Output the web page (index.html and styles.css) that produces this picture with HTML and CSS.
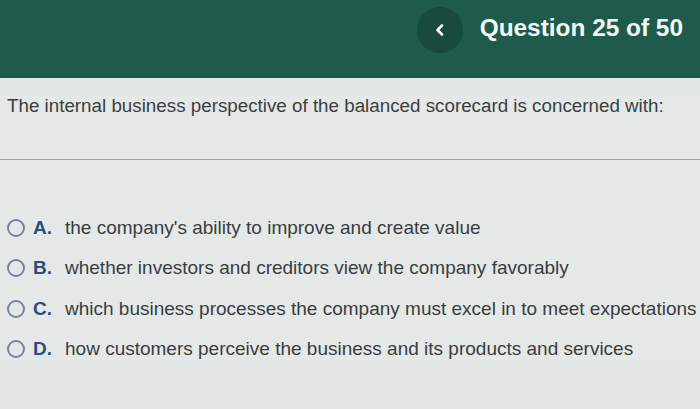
FILE: index.html
```html
<!DOCTYPE html>
<html>
<head>
<meta charset="utf-8">
<link rel="stylesheet" href="styles.css">
</head>
<body>
<header class="topbar">
  <button class="back" aria-label="Back">
    <svg width="12" height="14" viewBox="0 0 12 14"><path d="M8 2.5 L3.5 7 L8 11.5" fill="none" stroke="#fff" stroke-width="2.6" stroke-linecap="round" stroke-linejoin="round"/></svg>
  </button>
  <h1 class="title">Question 25 of 50</h1>
</header>
<main class="content">
  <p class="question">The internal business perspective of the balanced scorecard is concerned with:</p>
  <hr class="divider">
  <ul class="options">
    <li class="option"><span class="radio"></span><span class="letter">A.</span><span class="text">the company's ability to improve and create value</span></li>
    <li class="option"><span class="radio"></span><span class="letter">B.</span><span class="text">whether investors and creditors view the company favorably</span></li>
    <li class="option"><span class="radio"></span><span class="letter">C.</span><span class="text">which business processes the company must excel in to meet expectations</span></li>
    <li class="option"><span class="radio"></span><span class="letter">D.</span><span class="text">how customers perceive the business and its products and services</span></li>
  </ul>
</main>
</body>
</html>
```
FILE: styles.css
```css
html, body {
  margin: 0;
  padding: 0;
}
body {
  width: 700px;
  height: 409px;
  overflow: hidden;
  background: #e3e8e7;
  font-family: "Liberation Sans", Arial, sans-serif;
  color: #3a3d3f;
}
.topbar {
  height: 78px;
  background: #1f5b4d;
  display: flex;
  justify-content: flex-end;
  align-items: flex-start;
  padding: 7px 17px 0 0;
  box-sizing: border-box;
  gap: 17px;
}
.back {
  width: 46px;
  height: 46px;
  border-radius: 50%;
  background: #184a3e;
  border: none;
  padding: 0;
  display: flex;
  align-items: center;
  justify-content: center;
}
.title {
  margin: 7px 0 0 0;
  font-size: 24.4px;
  font-weight: bold;
  color: #f4f7f6;
  line-height: 28px;
}
.content {
  background: #e4e9e8;
}
.question {
  margin: 16px 0 0 0;
  padding: 0 0 0 7px;
  font-size: 18.8px;
  line-height: 24px;
  color: #3b3e40;
  height: 65px;
  box-sizing: border-box;
  white-space: nowrap;
}
.divider {
  margin: 0;
  border: none;
  border-top: 1px solid #9ea6a6;
  height: 0;
}
.options {
  list-style: none;
  margin: 0;
  padding: 56px 0 0 7px;
  display: flex;
  flex-direction: column;
  gap: 16.33px;
}
.option {
  display: flex;
  align-items: center;
  height: 24px;
  font-size: 19px;
}
.radio {
  width: 14px;
  height: 14px;
  border: 2px solid #74869a;
  border-radius: 50%;
  flex: none;
}
.letter {
  margin-left: 8px;
  width: 32px;
  font-weight: bold;
  color: #2d4c7c;
}
.text {
  white-space: nowrap;
  color: #3a3d3f;
}
```
